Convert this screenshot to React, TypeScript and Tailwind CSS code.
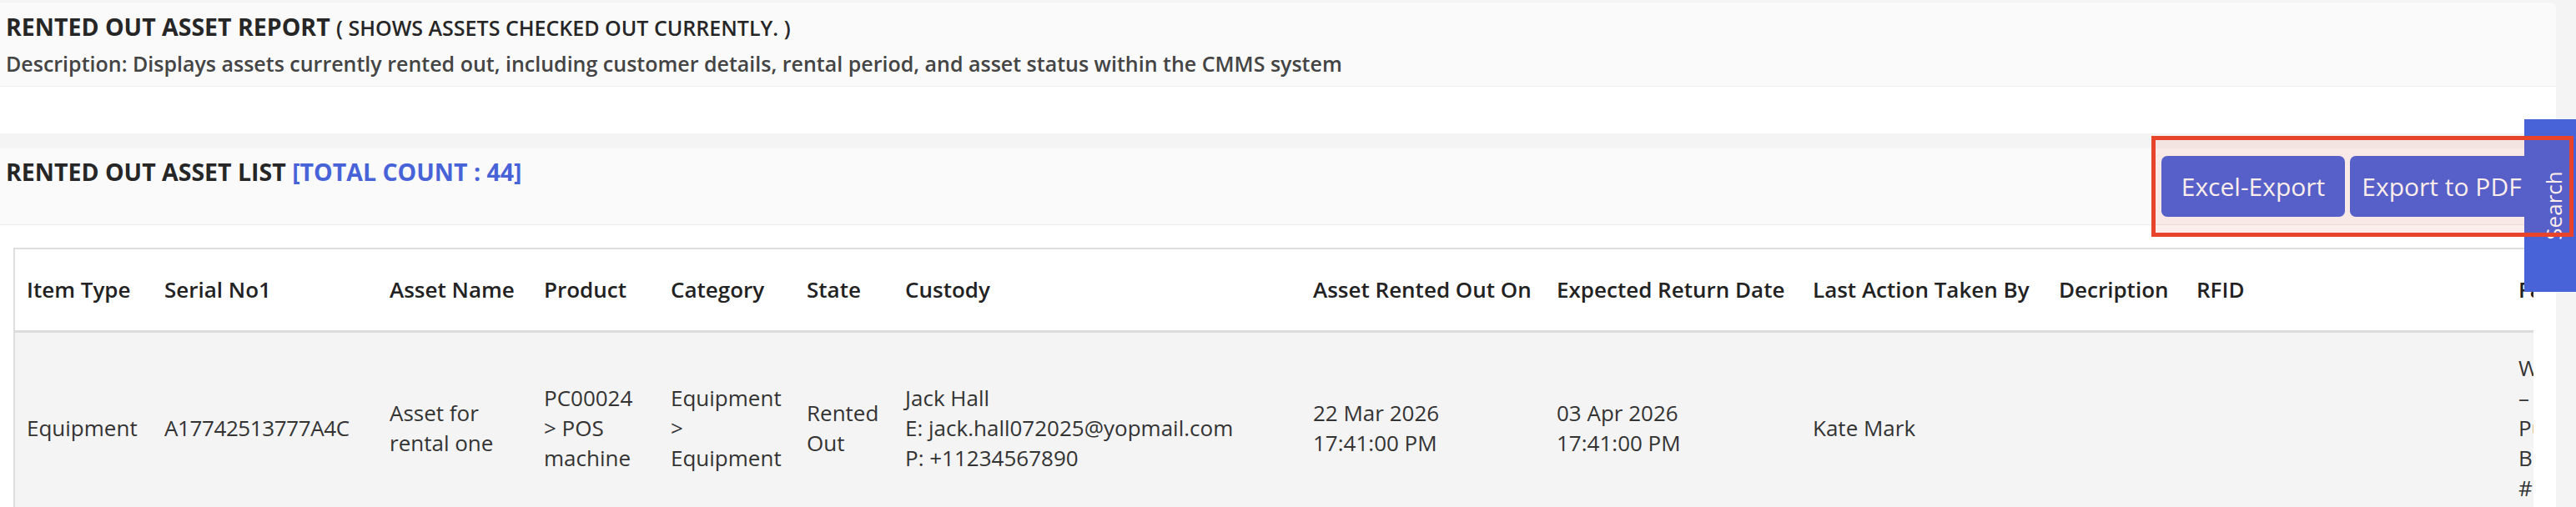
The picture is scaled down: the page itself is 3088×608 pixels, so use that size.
import React from 'react';

const columns = [
    { label: 'Item Type', width: 163 },
    { label: 'Serial No1', width: 270 },
    { label: 'Asset Name', width: 185 },
    { label: 'Product', width: 152 },
    { label: 'Category', width: 163 },
    { label: 'State', width: 118 },
    { label: 'Custody', width: 489 },
    { label: 'Asset Rented Out On', width: 292 },
    { label: 'Expected Return Date', width: 307 },
    { label: 'Last Action Taken By', width: 295 },
    { label: 'Decription', width: 165 },
    { label: 'RFID', width: 386 },
    { label: 'Facility Location', width: 260 },
];

const row: string[][] = [
    ['Equipment'],
    ['A17742513777A4C'],
    ['Asset for', 'rental one'],
    ['PC00024', '> POS', 'machine'],
    ['Equipment', '>', 'Equipment'],
    ['Rented', 'Out'],
    ['Jack Hall', 'E: jack.hall072025@yopmail.com', 'P: +11234567890'],
    ['22 Mar 2026', '17:41:00 PM'],
    ['03 Apr 2026', '17:41:00 PM'],
    ['Kate Mark'],
    [],
    [],
    ['Warehouse', '–', 'Pune', 'Block', '#12'],
];

function AssetTable() {
    return (
        <div className="overflow-hidden border-l-2 border-t-2 border-[#dedede]">
            <table className="table-fixed border-collapse w-[3200px]">
                <colgroup>
                    {columns.map(c => (
                        <col key={c.label} style={{ width: c.width }} />
                    ))}
                </colgroup>
                <thead>
                    <tr className="bg-white border-b-[3px] border-[#dcdcdc]">
                        {columns.map((c, i) => (
                            <th
                                key={c.label}
                                className={`h-[98px] pr-[8px] text-left align-middle whitespace-nowrap text-[26px] font-semibold text-[#222] ${i === 0 ? 'pl-[14px]' : 'pl-[16px]'}`}
                            >
                                {c.label}
                            </th>
                        ))}
                    </tr>
                </thead>
                <tbody>
                    <tr className="bg-[#f4f4f4]">
                        {row.map((lines, i) => (
                            <td
                                key={i}
                                className={`py-[24px] pr-[8px] align-middle text-[26px] leading-[36px] text-[#333] ${i === 0 ? 'pl-[14px]' : 'pl-[16px]'} ${i === 1 ? 'tracking-[-0.4px]' : ''}`}
                            >
                                {lines.map((l, j) => (
                                    <div key={j} className="whitespace-nowrap">{l}</div>
                                ))}
                            </td>
                        ))}
                    </tr>
                </tbody>
            </table>
        </div>
    );
}

export default function App() {
    return (
        <div className="relative w-[3088px] h-[608px] overflow-hidden bg-[#f4f4f4] font-['Open_Sans',sans-serif]">
            <div className="w-[3064px] pt-[3px]">
                {/* report card */}
                <div className="bg-white rounded-tr-[8px] overflow-hidden">
                    <div className="h-[101px] bg-[#fafafa] border-b border-[#eeeeee] pl-[7px] pt-[7px]">
                        <h1 className="text-[28.5px] leading-[45px] font-bold text-[#262626]">
                            RENTED OUT ASSET REPORT{' '}
                            <span className="text-[25px] font-semibold uppercase">( Shows assets checked out currently. )</span>
                        </h1>
                        <p className="mt-[3px] text-[25px] leading-[34px] font-semibold text-[#444]">
                            Description: Displays assets currently rented out, including customer details, rental period, and asset status within the CMMS system
                        </p>
                    </div>
                    <div className="h-[56px]" />
                </div>

                <div className="h-[18px]" />

                {/* list card */}
                <div className="bg-white h-[430px]">
                    <div className="h-[92px] flex justify-between items-start bg-[#fafafa] border-b border-[#ececec] pl-[7px] pr-[27px] pt-[6px]">
                        <h2 className="text-[28.5px] leading-[45px] font-bold text-[#262626]">
                            RENTED OUT ASSET LIST <span className="text-[#4863d8]">[TOTAL COUNT : 44]</span>
                        </h2>
                        <div className="flex gap-[6px] mt-[3px]">
                            <button className="w-[220px] h-[73px] rounded-[7px] bg-[#4863d8] text-white text-[30px]">
                                Excel-Export
                            </button>
                            <button className="w-[220px] h-[73px] rounded-[7px] bg-[#4863d8] text-white text-[30px]">
                                Export to PDF
                            </button>
                        </div>
                    </div>
                    <div className="pt-[27px] pl-[16px] pr-[27px]">
                        <AssetTable />
                    </div>
                </div>
            </div>

            {/* side search tab */}
            <div className="absolute left-[3026px] top-[143px] w-[62px] h-[207px] bg-[#4863d8] flex items-center justify-center pl-[8px]">
                <span className="-rotate-90 text-white text-[26px] whitespace-nowrap">Search</span>
            </div>

            {/* highlight annotation */}
            <div className="absolute left-[2579px] top-[163px] w-[506px] h-[121px] border-[5px] border-[#e8432b] bg-[rgba(232,67,43,0.09)]" />
        </div>
    );
}
